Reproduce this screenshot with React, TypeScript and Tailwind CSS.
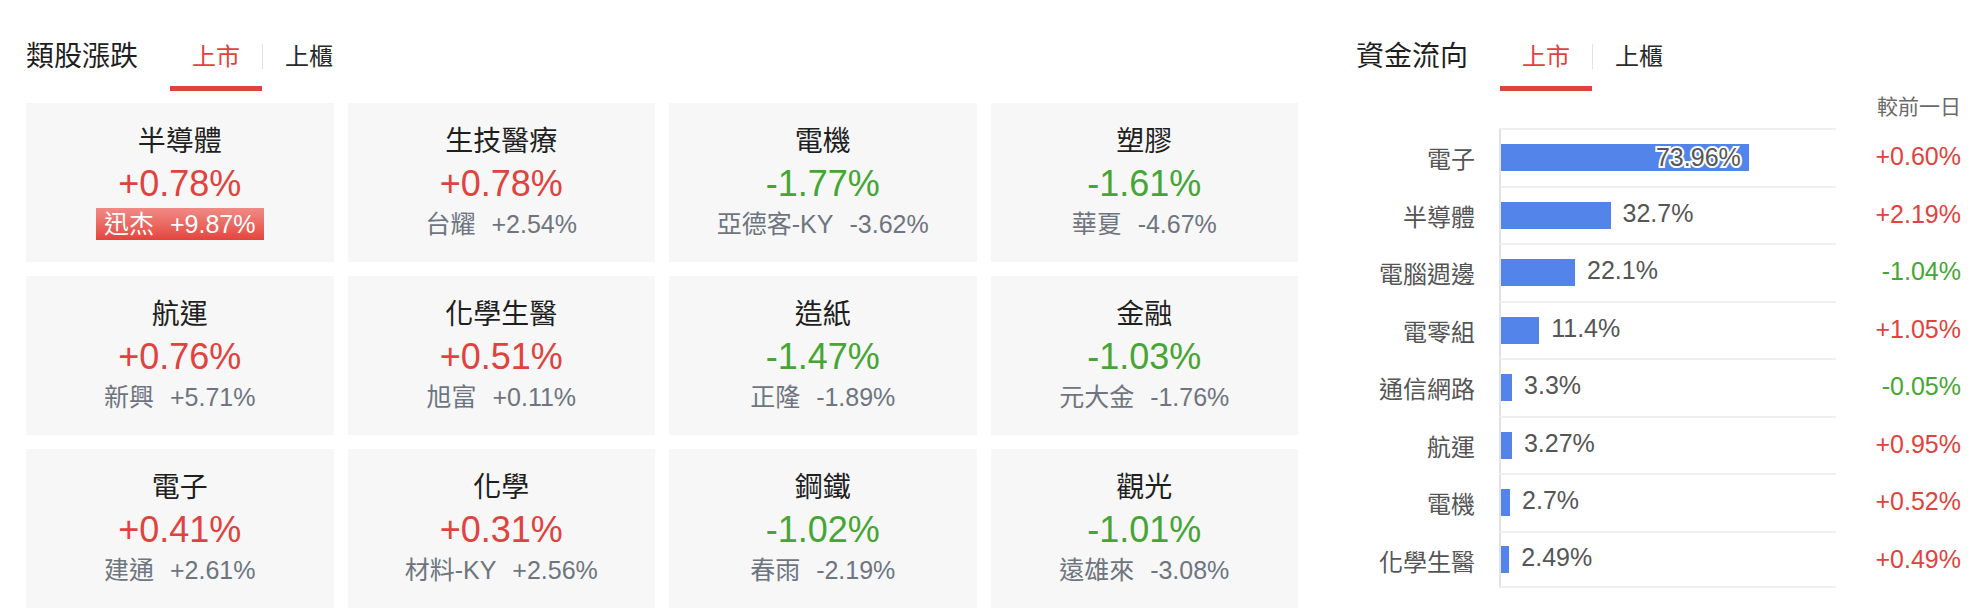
import React from "react";

type Card = { name: string; pct: string; up: boolean; sub: string; subPct: string; badge?: boolean };

const cards: Card[] = [
  { name: "半導體", pct: "+0.78%", up: true, sub: "迅杰", subPct: "+9.87%", badge: true },
  { name: "生技醫療", pct: "+0.78%", up: true, sub: "台耀", subPct: "+2.54%" },
  { name: "電機", pct: "-1.77%", up: false, sub: "亞德客-KY", subPct: "-3.62%" },
  { name: "塑膠", pct: "-1.61%", up: false, sub: "華夏", subPct: "-4.67%" },
  { name: "航運", pct: "+0.76%", up: true, sub: "新興", subPct: "+5.71%" },
  { name: "化學生醫", pct: "+0.51%", up: true, sub: "旭富", subPct: "+0.11%" },
  { name: "造紙", pct: "-1.47%", up: false, sub: "正隆", subPct: "-1.89%" },
  { name: "金融", pct: "-1.03%", up: false, sub: "元大金", subPct: "-1.76%" },
  { name: "電子", pct: "+0.41%", up: true, sub: "建通", subPct: "+2.61%" },
  { name: "化學", pct: "+0.31%", up: true, sub: "材料-KY", subPct: "+2.56%" },
  { name: "鋼鐵", pct: "-1.02%", up: false, sub: "春雨", subPct: "-2.19%" },
  { name: "觀光", pct: "-1.01%", up: false, sub: "遠雄來", subPct: "-3.08%" },
];

type Flow = { name: string; share: number; label: string; chg: string; up: boolean };

const flows: Flow[] = [
  { name: "電子", share: 73.96, label: "73.96%", chg: "+0.60%", up: true },
  { name: "半導體", share: 32.7, label: "32.7%", chg: "+2.19%", up: true },
  { name: "電腦週邊", share: 22.1, label: "22.1%", chg: "-1.04%", up: false },
  { name: "電零組", share: 11.4, label: "11.4%", chg: "+1.05%", up: true },
  { name: "通信網路", share: 3.3, label: "3.3%", chg: "-0.05%", up: false },
  { name: "航運", share: 3.27, label: "3.27%", chg: "+0.95%", up: true },
  { name: "電機", share: 2.7, label: "2.7%", chg: "+0.52%", up: true },
  { name: "化學生醫", share: 2.49, label: "2.49%", chg: "+0.49%", up: true },
];

const TRACK = 335;

function Header({ title }: { title: string }) {
  return (
    <div className="flex items-start pt-[37px] h-[91px]">
      <div className="text-[28px] leading-[40px] text-[#1f1f1f] w-[112px]">{title}</div>
      <div className="ml-[32px] flex items-start">
        <div className="px-[22px] h-[54px] border-b-[5px] border-[#e0433d] text-[24px] leading-[40px] text-[#e0433d]">
          上市
        </div>
        <div className="w-px h-[25px] mt-[7px] bg-[#e2e2e2]" />
        <div className="px-[22px] text-[24px] leading-[40px] text-[#2a2a2a]">上櫃</div>
      </div>
    </div>
  );
}

export default function App() {
  return (
    <div className="w-[1984px] h-[608px] bg-white flex pl-[26px] pr-[23px] overflow-hidden font-['Liberation_Sans','Noto_Sans_CJK_TC',sans-serif]">
      {/* Left: 類股漲跌 */}
      <div className="w-[1272px] shrink-0">
        <Header title="類股漲跌" />
        <div className="mt-[12px] grid grid-cols-4 gap-[14px] auto-rows-[159px]">
          {cards.map((c) => (
            <div key={c.name} className="bg-[#f7f7f7] flex flex-col items-center pt-[20px]">
              <div className="text-[28px] leading-[38px] text-[#1f1f1f]">{c.name}</div>
              <div
                className={
                  "text-[36px] leading-[46px] " + (c.up ? "text-[#e0433d]" : "text-[#45a634]")
                }
              >
                {c.pct}
              </div>
              {c.badge ? (
                <div className="mt-[1px] h-[32px] px-[8px] flex items-center text-[25px] leading-[32px] text-white bg-gradient-to-b from-[#f08a85] to-[#e3433d]">
                  <span>{c.sub}</span>
                  <span className="ml-[16px]">{c.subPct}</span>
                </div>
              ) : (
                <div className="mt-[1px] h-[32px] flex items-center text-[25px] leading-[32px] text-[#6e7580]">
                  <span>{c.sub}</span>
                  <span className="ml-[16px]">{c.subPct}</span>
                </div>
              )}
            </div>
          ))}
        </div>
      </div>

      {/* Right: 資金流向 */}
      <div className="ml-[58px] flex-1">
        <Header title="資金流向" />
        <div className="h-[37px] text-right text-[21px] leading-[32px] text-[#6a6a6a]">較前一日</div>
        <div className="flex flex-col">
          {flows.map((f, i) => {
            const w = (f.share / 100) * TRACK;
            const inside = f.share > 50;
            return (
              <div key={f.name} className="flex h-[57.5px]">
                <div className="w-[119px] text-right text-[24px] leading-[57px] pt-[3px] text-[#555]">
                  {f.name}
                </div>
                <div
                  className={
                    "ml-[24px] w-[337px] border-l-2 border-l-[#e2e2e2] border-t-2 border-t-[#f0f0f0] flex items-center " +
                    (i === flows.length - 1 ? "border-b-2 border-b-[#f0f0f0]" : "")
                  }
                >
                  <div
                    className="h-[27px] bg-[#5384ea] flex items-center justify-end shrink-0"
                    style={{ width: `${w}px` }}
                  >
                    {inside && (
                      <span className="pr-[8px] text-[25px] leading-[27px] text-[#555] [paint-order:stroke_fill] [-webkit-text-stroke:4px_white]">
                        {f.label}
                      </span>
                    )}
                  </div>
                  {!inside && (
                    <span className="ml-[12px] text-[25px] leading-[27px] text-[#555] -mt-[4px]">{f.label}</span>
                  )}
                </div>
                <div
                  className={
                    "flex-1 text-right text-[25px] leading-[57px] " + (f.up ? "text-[#e0433d]" : "text-[#45a634]")
                  }
                >
                  {f.chg}
                </div>
              </div>
            );
          })}
        </div>
      </div>
    </div>
  );
}
